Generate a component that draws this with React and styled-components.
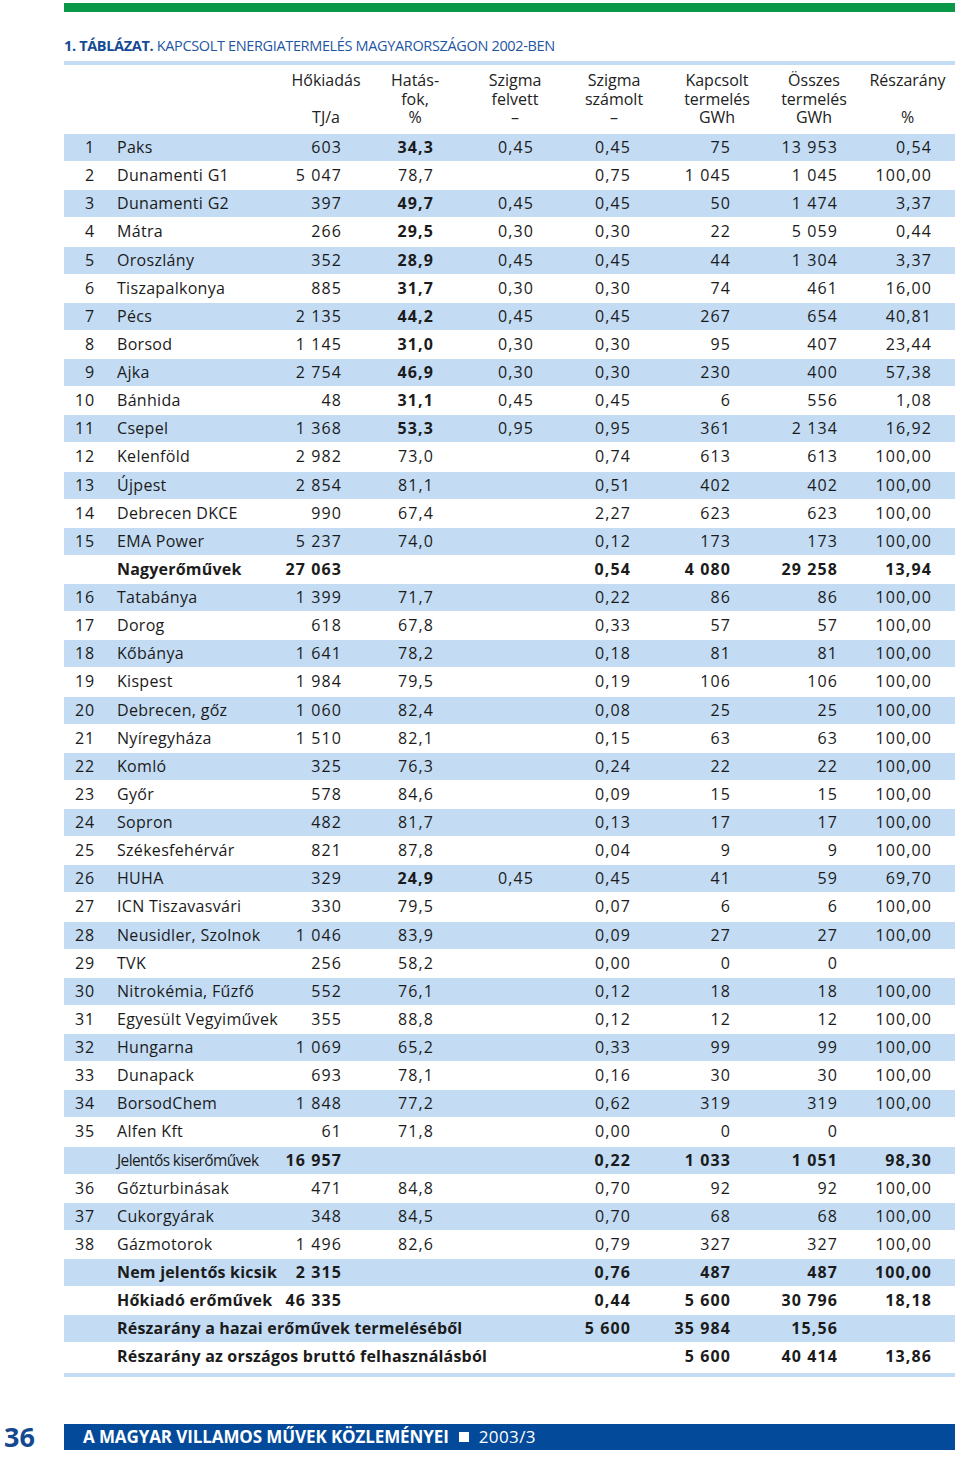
import React from 'react';
import styled, { createGlobalStyle } from 'styled-components';

const GlobalStyle = createGlobalStyle`
  body {
    margin: 0;
    background: #fff;
    font-family: "Open Sans", "Liberation Sans", sans-serif;
    color: #1b1b1b;
  }
`;

const COLS = '36px 170px 71px 92px 100px 97px 100px 107px 94px';

const Page = styled.div`
  width: 891px;
  padding: 3px 5px 0 64px;
`;

const GreenBar = styled.div`
  height: 9px;
  background: #0a9748;
`;

const Title = styled.h1`
  margin: 25px 0 0;
  font-size: 14.5px;
  line-height: 18px;
  font-weight: 400;
  color: #1f56a3;
  white-space: nowrap;
  letter-spacing: -0.35px;
  b {
    font-weight: 700;
    color: #174a94;
  }
`;

const Rule = styled.div`
  height: 4px;
  background: #c3dcf4;
  margin-top: ${p => p.$top}px;
`;

const Head = styled.div`
  display: grid;
  grid-template-columns: 226px 72px 106px 94px 104px 102px 92px 95px;
  margin-top: 6px;
  font-size: 16px;
  line-height: 18.5px;
  color: #222;
`;

const HeadCell = styled.div`
  display: flex;
  flex-direction: column;
  align-items: center;
  span { height: 18.5px; white-space: nowrap; }
`;

const Table = styled.div`
  margin-top: 6.5px;
`;

const Row = styled.div`
  display: grid;
  grid-template-columns: ${COLS};
  height: 28.13px;
  padding-right: 24px;
  align-items: center;
  background: ${p => (p.$shade ? '#c3dcf4' : 'transparent')};
  font-size: 16px;
  box-shadow: ${p => (p.$shade ? 'inset 0 1px 0 #fff' : 'none')};
`;

const No = styled.div`
  text-align: right;
  padding-right: 5px;
  letter-spacing: 0.8px;
`;

const Name = styled.div`
  padding-left: 17px;
  white-space: nowrap;
  letter-spacing: 0.3px;
`;

const Label = styled.div`
  grid-column: 2 / span ${p => p.$span};
  padding-left: 17px;
  white-space: nowrap;
  font-weight: ${p => (p.$narrow ? 400 : 700)};
  font-size: ${p => (p.$narrow ? '15.5px' : '16px')};
  letter-spacing: ${p => (p.$narrow ? '-0.6px' : '0.2px')};
`;

const Num = styled.div`
  text-align: right;
  white-space: nowrap;
  letter-spacing: 1.1px;
  margin-right: -1px;
  font-weight: ${p => (p.$bold ? 700 : 400)};
`;

const Footer = styled.div`
  display: flex;
  align-items: center;
  margin: 46px 0 0 -64px;
  width: 955px;
`;

const PageNum = styled.div`
  width: 64px;
  padding-left: 4px;
  box-sizing: border-box;
  font-size: 27px;
  font-weight: 700;
  color: #15498f;
  line-height: 28px;
`;

const Bar = styled.div`
  flex: 1;
  height: 26px;
  background: #034b9a;
  display: flex;
  align-items: center;
  padding-left: 19px;
  gap: 10px;
  color: #fff;
  font-size: 17px;
  white-space: nowrap;
  b { font-weight: 700; letter-spacing: -0.1px; }
  span { letter-spacing: 0.4px; }
`;

const Square = styled.i`
  width: 10px;
  height: 10px;
  background: #fff;
`;

const rows = [
  { no: 1, name: 'Paks', c: ['603', '34,3', '0,45', '0,45', '75', '13 953', '0,54'], b: true },
  { no: 2, name: 'Dunamenti G1', c: ['5 047', '78,7', '', '0,75', '1 045', '1 045', '100,00'] },
  { no: 3, name: 'Dunamenti G2', c: ['397', '49,7', '0,45', '0,45', '50', '1 474', '3,37'], b: true },
  { no: 4, name: 'Mátra', c: ['266', '29,5', '0,30', '0,30', '22', '5 059', '0,44'], b: true },
  { no: 5, name: 'Oroszlány', c: ['352', '28,9', '0,45', '0,45', '44', '1 304', '3,37'], b: true },
  { no: 6, name: 'Tiszapalkonya', c: ['885', '31,7', '0,30', '0,30', '74', '461', '16,00'], b: true },
  { no: 7, name: 'Pécs', c: ['2 135', '44,2', '0,45', '0,45', '267', '654', '40,81'], b: true },
  { no: 8, name: 'Borsod', c: ['1 145', '31,0', '0,30', '0,30', '95', '407', '23,44'], b: true },
  { no: 9, name: 'Ajka', c: ['2 754', '46,9', '0,30', '0,30', '230', '400', '57,38'], b: true },
  { no: 10, name: 'Bánhida', c: ['48', '31,1', '0,45', '0,45', '6', '556', '1,08'], b: true },
  { no: 11, name: 'Csepel', c: ['1 368', '53,3', '0,95', '0,95', '361', '2 134', '16,92'], b: true },
  { no: 12, name: 'Kelenföld', c: ['2 982', '73,0', '', '0,74', '613', '613', '100,00'] },
  { no: 13, name: 'Újpest', c: ['2 854', '81,1', '', '0,51', '402', '402', '100,00'] },
  { no: 14, name: 'Debrecen DKCE', c: ['990', '67,4', '', '2,27', '623', '623', '100,00'] },
  { no: 15, name: 'EMA Power', c: ['5 237', '74,0', '', '0,12', '173', '173', '100,00'] },
  { label: 'Nagyerőművek', span: 1, c: ['27 063', '', '', '0,54', '4 080', '29 258', '13,94'] },
  { no: 16, name: 'Tatabánya', c: ['1 399', '71,7', '', '0,22', '86', '86', '100,00'] },
  { no: 17, name: 'Dorog', c: ['618', '67,8', '', '0,33', '57', '57', '100,00'] },
  { no: 18, name: 'Kőbánya', c: ['1 641', '78,2', '', '0,18', '81', '81', '100,00'] },
  { no: 19, name: 'Kispest', c: ['1 984', '79,5', '', '0,19', '106', '106', '100,00'] },
  { no: 20, name: 'Debrecen, gőz', c: ['1 060', '82,4', '', '0,08', '25', '25', '100,00'] },
  { no: 21, name: 'Nyíregyháza', c: ['1 510', '82,1', '', '0,15', '63', '63', '100,00'] },
  { no: 22, name: 'Komló', c: ['325', '76,3', '', '0,24', '22', '22', '100,00'] },
  { no: 23, name: 'Győr', c: ['578', '84,6', '', '0,09', '15', '15', '100,00'] },
  { no: 24, name: 'Sopron', c: ['482', '81,7', '', '0,13', '17', '17', '100,00'] },
  { no: 25, name: 'Székesfehérvár', c: ['821', '87,8', '', '0,04', '9', '9', '100,00'] },
  { no: 26, name: 'HUHA', c: ['329', '24,9', '0,45', '0,45', '41', '59', '69,70'], b: true },
  { no: 27, name: 'ICN Tiszavasvári', c: ['330', '79,5', '', '0,07', '6', '6', '100,00'] },
  { no: 28, name: 'Neusidler, Szolnok', c: ['1 046', '83,9', '', '0,09', '27', '27', '100,00'] },
  { no: 29, name: 'TVK', c: ['256', '58,2', '', '0,00', '0', '0', ''] },
  { no: 30, name: 'Nitrokémia, Fűzfő', c: ['552', '76,1', '', '0,12', '18', '18', '100,00'] },
  { no: 31, name: 'Egyesült Vegyiművek', c: ['355', '88,8', '', '0,12', '12', '12', '100,00'] },
  { no: 32, name: 'Hungarna', c: ['1 069', '65,2', '', '0,33', '99', '99', '100,00'] },
  { no: 33, name: 'Dunapack', c: ['693', '78,1', '', '0,16', '30', '30', '100,00'] },
  { no: 34, name: 'BorsodChem', c: ['1 848', '77,2', '', '0,62', '319', '319', '100,00'] },
  { no: 35, name: 'Alfen Kft', c: ['61', '71,8', '', '0,00', '0', '0', ''] },
  { label: 'Jelentős kiserőművek', span: 1, narrow: true, c: ['16 957', '', '', '0,22', '1 033', '1 051', '98,30'] },
  { no: 36, name: 'Gőzturbinásak', c: ['471', '84,8', '', '0,70', '92', '92', '100,00'] },
  { no: 37, name: 'Cukorgyárak', c: ['348', '84,5', '', '0,70', '68', '68', '100,00'] },
  { no: 38, name: 'Gázmotorok', c: ['1 496', '82,6', '', '0,79', '327', '327', '100,00'] },
  { label: 'Nem jelentős kicsik', span: 1, c: ['2 315', '', '', '0,76', '487', '487', '100,00'] },
  { label: 'Hőkiadó erőművek', span: 1, c: ['46 335', '', '', '0,44', '5 600', '30 796', '18,18'] },
  { label: 'Részarány a hazai erőművek termeléséből', span: 4, c: ['5 600', '35 984', '15,56', ''] },
  { label: 'Részarány az országos bruttó felhasználásból', span: 5, c: ['5 600', '40 414', '13,86'] },
];

const heads = [
  ['', '', ''],
  ['Hőkiadás', '', 'TJ/a'],
  ['Hatás-', 'fok,', '%'],
  ['Szigma', 'felvett', '–'],
  ['Szigma', 'számolt', '–'],
  ['Kapcsolt', 'termelés', 'GWh'],
  ['Összes', 'termelés', 'GWh'],
  ['Részarány', '', '%'],
];

export default function App() {
  return (
    <>
      <GlobalStyle />
      <Page>
        <GreenBar />
        <Title>
          <b>1. TÁBLÁZAT.</b> KAPCSOLT ENERGIATERMELÉS MAGYARORSZÁGON 2002-BEN
        </Title>
        <Rule $top={6} />
        <Head>
          {heads.map((h, i) => (
            <HeadCell key={i}>
              {h.map((t, j) => <span key={j}>{t}</span>)}
            </HeadCell>
          ))}
        </Head>
        <Table>
          {rows.map((r, i) => (
            <Row key={i} $shade={i % 2 === 0}>
              {r.label ? (
                <>
                  <No />
                  <Label $span={r.span} $narrow={r.narrow}>{r.label}</Label>
                  {r.c.map((v, j) => <Num key={j} $bold>{v}</Num>)}
                </>
              ) : (
                <>
                  <No>{r.no}</No>
                  <Name>{r.name}</Name>
                  {r.c.map((v, j) => (
                    <Num key={j} $bold={j === 1 && r.b}>{v}</Num>
                  ))}
                </>
              )}
            </Row>
          ))}
        </Table>
        <Rule $top={2} />
        <Footer>
          <PageNum>36</PageNum>
          <Bar>
            <b>A MAGYAR VILLAMOS MŰVEK KÖZLEMÉNYEI</b>
            <Square />
            <span>2003/3</span>
          </Bar>
        </Footer>
      </Page>
    </>
  );
}
